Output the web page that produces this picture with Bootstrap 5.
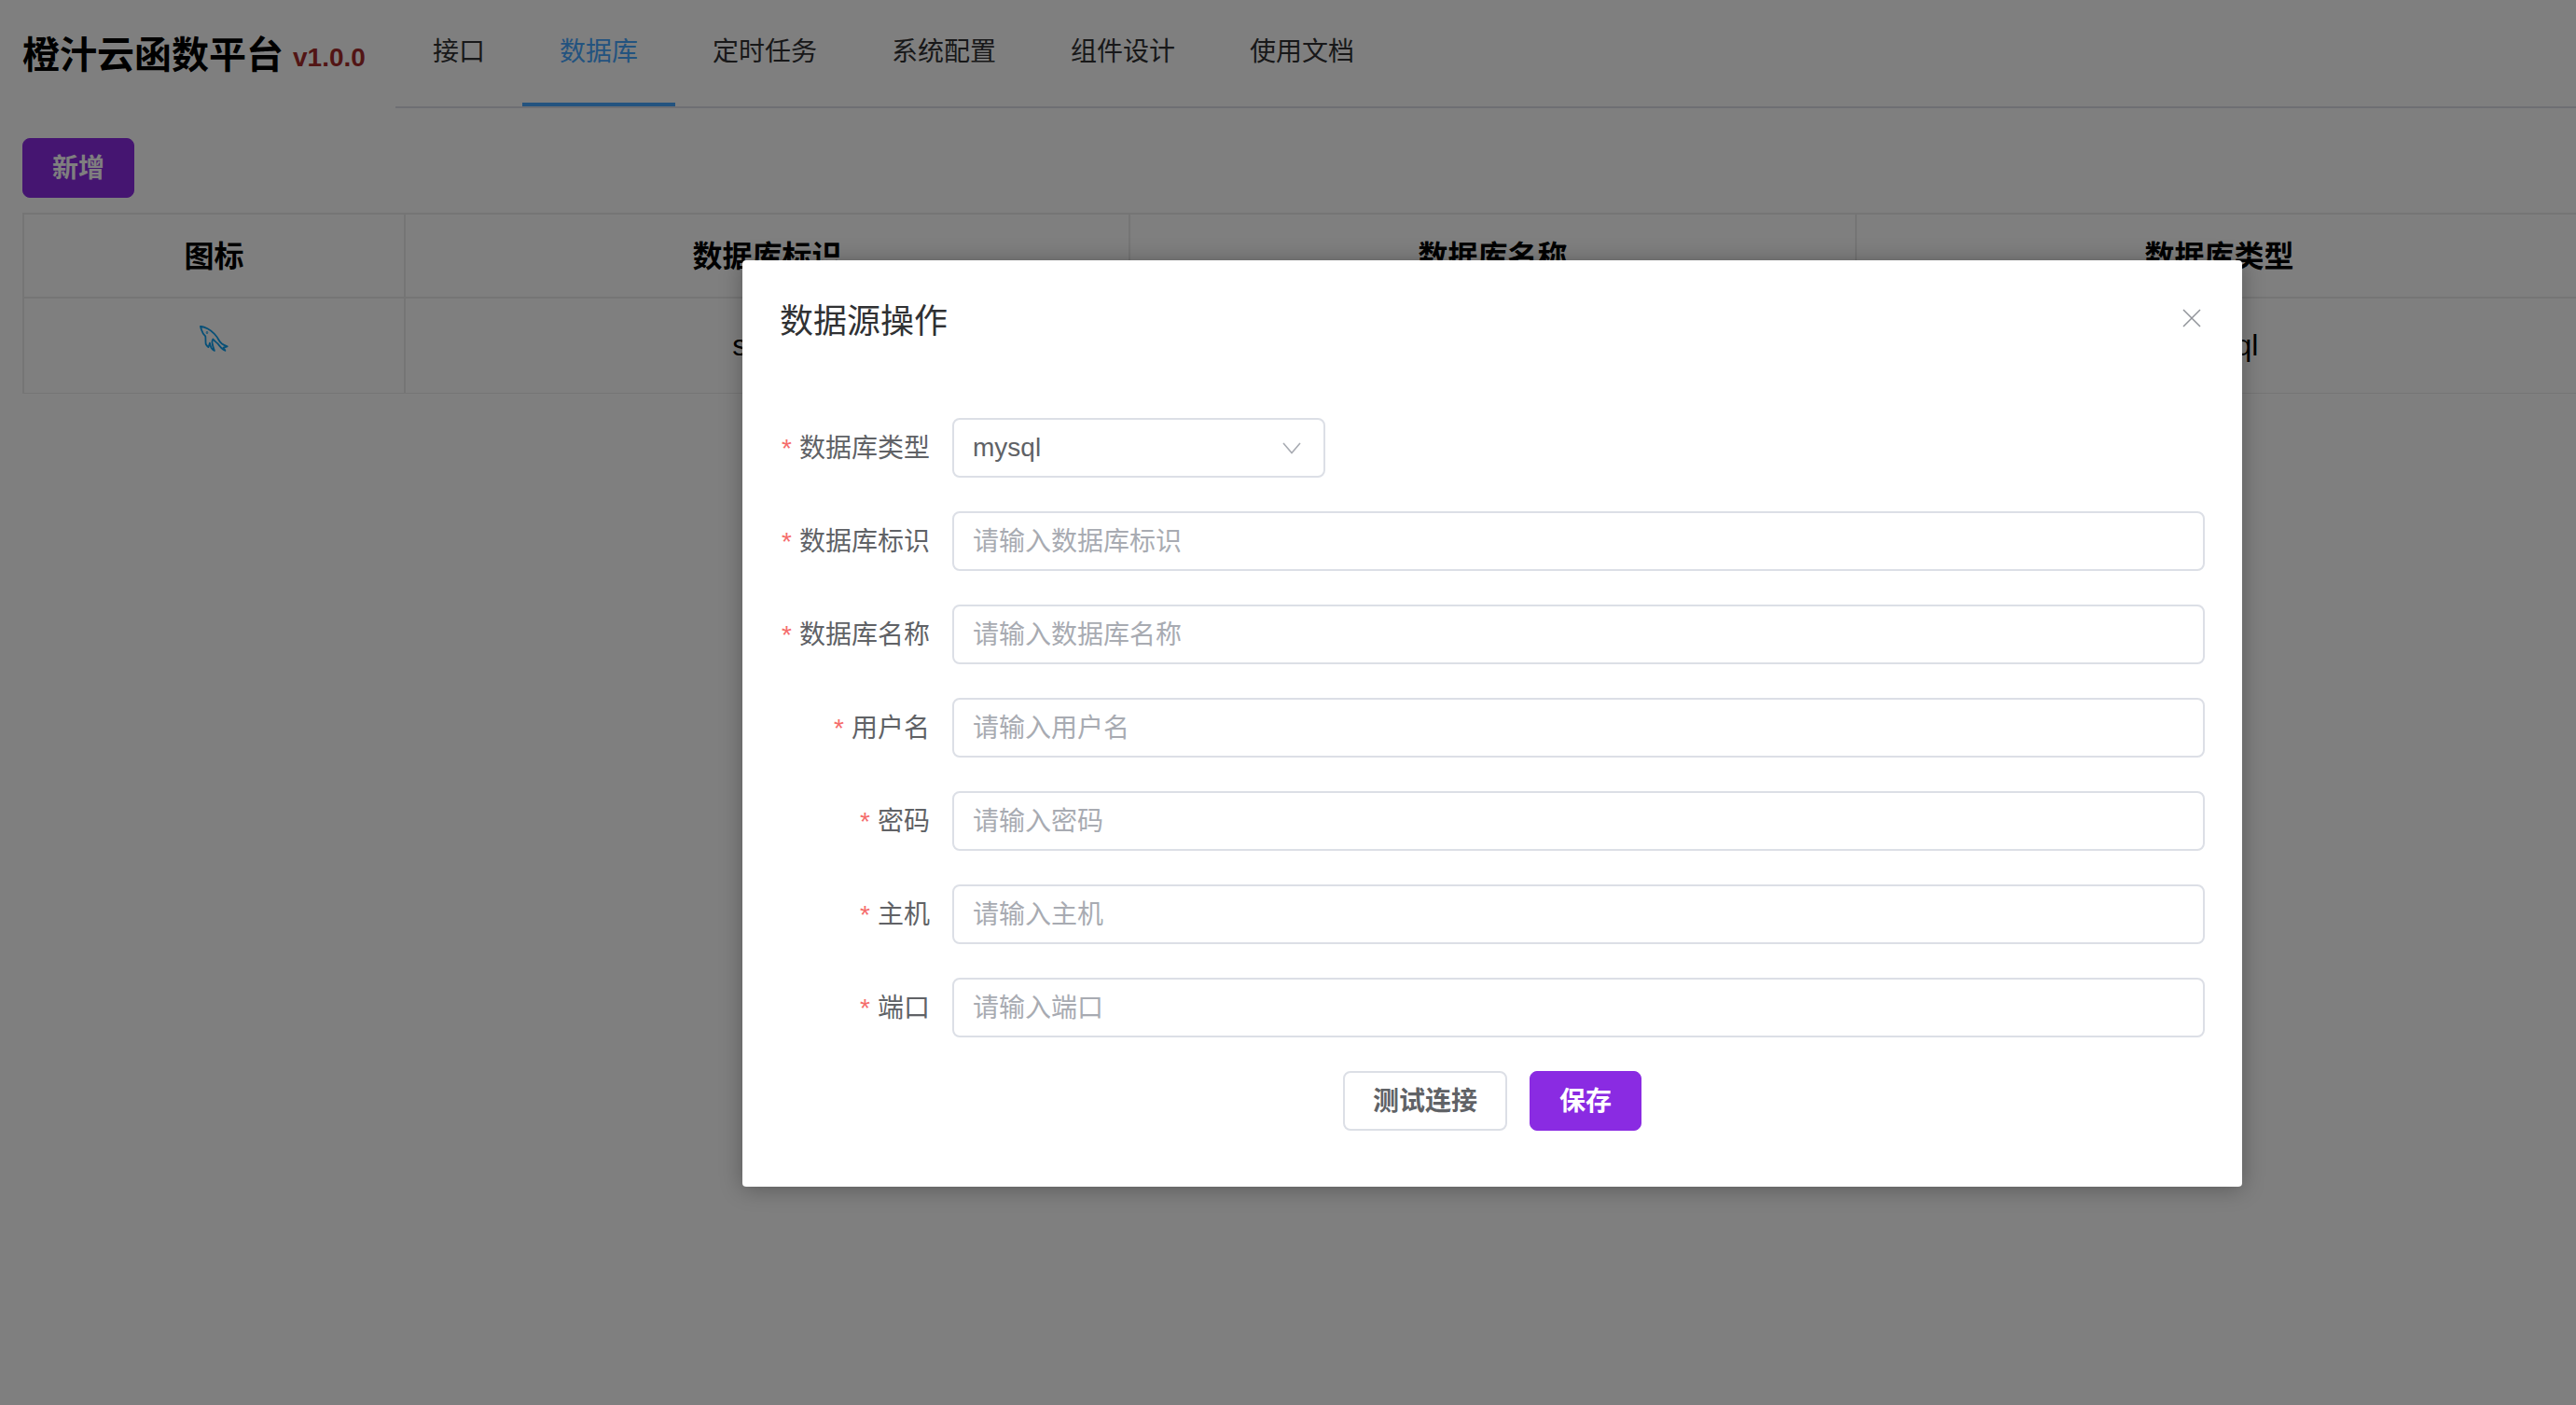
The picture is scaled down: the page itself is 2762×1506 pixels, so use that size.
<!DOCTYPE html>
<html lang="zh-CN">
<head>
<meta charset="utf-8">
<title>橙汁云函数平台</title>
<link href="https://cdn.jsdelivr.net/npm/bootstrap@5.3.0/dist/css/bootstrap.min.css" rel="stylesheet">
<style>
html,body{height:100%;overflow:hidden}
body{font-family:"Liberation Sans","Noto Sans CJK SC",sans-serif;background:#fff;font-size:28px;color:#000;position:relative}
.app-head{height:116px}
.app-brand{padding-left:24px;width:424px;font-size:40px;font-weight:700;line-height:118px;white-space:nowrap;flex:none}
.app-ver{font-size:28px;color:#a52a2a;margin-left:10px;vertical-align:2px}
.app-nav{flex:1;border-bottom:2px solid #dcdfe6;height:116px}
.app-nav .nav-link{height:114px;padding:0 40px;font-size:28px;line-height:112px;color:#303133;border-bottom:4px solid transparent}
.app-nav .nav-link.active{color:#46a6fe;border-bottom-color:#46a6fe}
.app-main{padding:32px 0 0 24px}
.btn-violet{--bs-btn-color:#fff;--bs-btn-bg:#8a2be2;--bs-btn-border-color:#8a2be2;--bs-btn-hover-color:#fff;--bs-btn-hover-bg:#8a2be2;--bs-btn-hover-border-color:#8a2be2;height:64px;width:120px;border-radius:8px;font-size:28px;font-weight:700;padding:2px 0 0;line-height:60px}
.btn-plain{--bs-btn-color:#606266;--bs-btn-bg:#fff;--bs-btn-border-color:#dcdfe6;--bs-btn-hover-color:#606266;--bs-btn-hover-bg:#fff;--bs-btn-hover-border-color:#dcdfe6;height:64px;width:176px;border-radius:8px;font-size:28px;font-weight:700;padding:2px 0 0;line-height:56px;border-width:2px}
.data-table{margin:16px 0 0;width:2744px;table-layout:fixed;border-collapse:collapse;--bs-table-border-color:#ebebeb;--bs-table-bg:#fff}
.data-table>*>*>*{border:2px solid #ebebeb;text-align:center;vertical-align:middle;padding:0}
.data-table thead th{height:90px;font-size:32px;font-weight:700;color:#000;vertical-align:top;padding-top:21px;line-height:48px}
.data-table tbody td{height:102px;font-size:32px;font-weight:400;color:#000}
.dolphin{display:block;margin:-13px auto 0}
.scrim{position:absolute;inset:0;background:rgba(0,0,0,.5)}
.dlg{position:absolute;left:796px;top:279px;width:1608px;height:993px;margin:0}
.dlg .modal-content{height:100%;border:0;border-radius:4px;box-shadow:0 2px 24px rgba(0,0,0,.3);display:block;padding:0 40px;background:#fff}
.dlg-head{height:169px;padding-top:46px;display:flex;justify-content:space-between;align-items:flex-start}
.dlg-title{font-size:36px;line-height:40px;color:#303133;font-weight:400;margin:0}
.dlg-x{background:none;border:0;padding:0;width:20px;height:20px;margin:6px 4px 0 0;line-height:0}
.frow{height:64px;margin-bottom:36px}
.flabel{width:185px;padding:2px 24px 0 0;text-align:right;font-size:28px;color:#606266;margin:0;flex:none;white-space:nowrap}
.flabel i{font-style:normal;color:#f56c6c;margin-right:8px}
.dlg .form-control,.dlg .form-select{height:64px;font-size:28px;padding:2px 20px 0;border:2px solid #dcdfe6;border-radius:8px;color:#606266;box-shadow:none;width:1343px;flex:none;background-color:#fff}
.dlg .form-control::placeholder{color:#a8abb2;opacity:1}
.dlg .form-select{width:400px;padding-top:0;background-position:right 24px center;background-size:20px 13px;--bs-form-select-bg-img:url("data:image/svg+xml,%3csvg xmlns='http://www.w3.org/2000/svg' viewBox='0 0 20 13'%3e%3cpath fill='none' stroke='%23a8abb2' stroke-width='1.6' d='M1 1l9 10.5L19 1'/%3e%3c/svg%3e")}
.dlg-foot{gap:24px}
</style>
</head>
<body>
<header class="app-head d-flex">
  <div class="app-brand">橙汁云函数平台<span class="app-ver">v1.0.0</span></div>
  <ul class="nav app-nav">
    <li class="nav-item"><a class="nav-link" href="#">接口</a></li>
    <li class="nav-item"><a class="nav-link active" href="#">数据库</a></li>
    <li class="nav-item"><a class="nav-link" href="#">定时任务</a></li>
    <li class="nav-item"><a class="nav-link" href="#">系统配置</a></li>
    <li class="nav-item"><a class="nav-link" href="#">组件设计</a></li>
    <li class="nav-item"><a class="nav-link" href="#">使用文档</a></li>
  </ul>
</header>
<main class="app-main">
  <button type="button" class="btn btn-violet">新增</button>
  <table class="table data-table">
    <colgroup><col style="width:409px"><col style="width:777px"><col style="width:779px"><col style="width:779px"></colgroup>
    <thead><tr><th>图标</th><th>数据库标识</th><th>数据库名称</th><th>数据库类型</th></tr></thead>
    <tbody><tr>
      <td><svg class="dolphin" width="32" height="30" viewBox="0 0 32 30" fill="none" stroke="#0e9fee" stroke-width="1.8" stroke-linejoin="round" stroke-linecap="round"><path d="M1 .8C3.500 1 6 2 8.500 3.200c3 1.500 5.500 3.500 7.500 5.800 1.800 2 3.200 3.800 4.300 6 1 2 2.300 3.300 3.700 4.500 1.500 1.100 3.500 2 5.700 2.900-1.500.3-2.800.5-4 1.100.7 1.200 1.300 2.300 1.700 3.300-1.500-.7-2.800-1.700-4-2.800-1.800-1.700-3-3.800-4.700-5.300-1.400-1.300-3-2.400-4.300-4.200-.8 1.300-1.100 2.600-.9 4 .4 3 1.300 5.500 2.400 8.300-1.500-.6-2.600-1.500-3.400-2.900-.7-1.500-1.100-3.300-1.600-5.200-.3 1.500-.8 3-1.500 4.400-1.200-1-2-2-2.700-3.300-.4-2.600-.1-5.400-.4-8.300C4.200 10 3 7.500 2.200 5 1.600 3.500 1.200 2 1 .8z"/><circle cx="8" cy="7.500" r=".4"/></svg></td>
      <td>sqlite</td><td>sqlite</td><td>mysql</td>
    </tr></tbody>
  </table>
</main>
<div class="scrim"></div>
<div class="modal-dialog dlg">
  <div class="modal-content">
    <div class="dlg-head">
      <h5 class="dlg-title">数据源操作</h5>
      <button type="button" class="dlg-x" aria-label="关闭"><svg width="20" height="20" viewBox="0 0 20 20" fill="none" stroke="#909399" stroke-width="1.5"><path d="M1 1l18 18M19 1L1 19"/></svg></button>
    </div>
    <form>
      <div class="frow d-flex align-items-center"><label class="flabel"><i>*</i>数据库类型</label><select class="form-select"><option>mysql</option></select></div>
      <div class="frow d-flex align-items-center"><label class="flabel"><i>*</i>数据库标识</label><input class="form-control" placeholder="请输入数据库标识"></div>
      <div class="frow d-flex align-items-center"><label class="flabel"><i>*</i>数据库名称</label><input class="form-control" placeholder="请输入数据库名称"></div>
      <div class="frow d-flex align-items-center"><label class="flabel"><i>*</i>用户名</label><input class="form-control" placeholder="请输入用户名"></div>
      <div class="frow d-flex align-items-center"><label class="flabel"><i>*</i>密码</label><input class="form-control" placeholder="请输入密码"></div>
      <div class="frow d-flex align-items-center"><label class="flabel"><i>*</i>主机</label><input class="form-control" placeholder="请输入主机"></div>
      <div class="frow d-flex align-items-center"><label class="flabel"><i>*</i>端口</label><input class="form-control" placeholder="请输入端口"></div>
      <div class="d-flex justify-content-center dlg-foot">
        <button type="button" class="btn btn-plain">测试连接</button>
        <button type="button" class="btn btn-violet">保存</button>
      </div>
    </form>
  </div>
</div>
<script src="https://cdn.jsdelivr.net/npm/bootstrap@5.3.0/dist/js/bootstrap.bundle.min.js"></script>
</body>
</html>
